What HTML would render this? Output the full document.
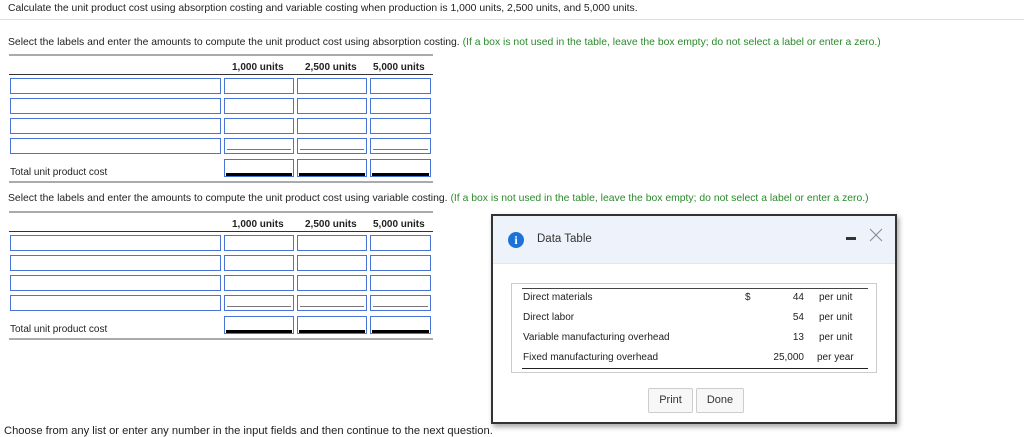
<!DOCTYPE html>
<html><head><style>
body{margin:0;width:1024px;height:437px;background:#fff;font-family:"Liberation Sans",Arial,sans-serif;font-size:10px;color:#222;position:relative;overflow:hidden}
.a{position:absolute;white-space:nowrap}
.g{color:#2a8a2a}
.b{position:absolute;border:1px solid #4a74d8;box-sizing:border-box;background:#fff}
.hl{position:absolute;height:2px;background:#aaa}
.hd{position:absolute;height:1px;background:#333}
.u{position:absolute;height:1px;background:#777}
.uu{position:absolute;height:3px;background:#000}
.d{font-size:10px}
</style></head><body>
<div class="a" style="left:8px;top:3px;font-size:10.4px">Calculate the unit product cost using absorption costing and variable costing when production is 1,000 units, 2,500 units, and 5,000 units.</div>
<div style="position:absolute;left:0;top:19px;width:1024px;height:1px;background:#ddd"></div>
<div class="a" style="left:8px;top:37px;font-size:10.4px">Select the labels and enter the amounts to compute the unit product cost using absorption costing. <span class="g">(If a box is not used in the table, leave the box empty; do not select a label or enter a zero.)</span></div>
<div class="a" style="left:8px;top:193px;font-size:10.4px">Select the labels and enter the amounts to compute the unit product cost using variable costing. <span class="g">(If a box is not used in the table, leave the box empty; do not select a label or enter a zero.)</span></div>
<div class="a" style="left:4px;top:425px;font-size:11.2px">Choose from any list or enter any number in the input fields and then continue to the next question.</div>

<div id="t1"></div>
<script>
function tbl(o){
 let h='';
 h+=`<div class="hl" style="left:9px;top:${o+54}px;width:424px"></div>`;
 h+=`<div class="a" style="left:232px;top:${o+62}px;font-weight:bold;font-size:10px">1,000 units</div>`;
 h+=`<div class="a" style="left:305px;top:${o+62}px;font-weight:bold;font-size:10px">2,500 units</div>`;
 h+=`<div class="a" style="left:373px;top:${o+62}px;font-weight:bold;font-size:10px">5,000 units</div>`;
 h+=`<div class="hd" style="left:9px;top:${o+74}px;width:424px"></div>`;
 const ys=[78,98,118,138];
 ys.forEach((y,i)=>{
  h+=`<div class="b" style="left:10px;top:${o+y}px;width:211px;height:16px"></div>`;
  [[224,70],[297,70],[370,61]].forEach(([x,w])=>{
   h+=`<div class="b" style="left:${x}px;top:${o+y}px;width:${w}px;height:16px"></div>`;
   if(i==3)h+=`<div class="u" style="left:${x+3}px;top:${o+y+11}px;width:${w-6}px"></div>`;
  });
 });
 [[224,70],[297,70],[370,61]].forEach(([x,w])=>{
  h+=`<div class="b" style="left:${x}px;top:${o+159}px;width:${w}px;height:18px"></div>`;
  h+=`<div class="uu" style="left:${x+2}px;top:${o+173}px;width:${w-4}px"></div>`;
 });
 h+=`<div class="a" style="left:10px;top:${o+167}px;font-size:10px">Total unit product cost</div>`;
 h+=`<div class="hl" style="left:9px;top:${o+181}px;width:424px"></div>`;
 return h;
}
document.getElementById('t1').outerHTML=tbl(0)+tbl(157);
</script>

<div style="position:absolute;left:491px;top:214px;width:406px;height:210px;border:2px solid #333;box-sizing:border-box;background:#fff;box-shadow:2px 3px 5px rgba(0,0,0,.35)">
 <div style="position:absolute;left:0;top:0;right:0;height:47px;background:#eef3fb;border-bottom:1px solid #dde8f5"></div>
 <div style="position:absolute;left:15px;top:16px;width:16px;height:16px;border-radius:50%;background:#1a73d9;color:#fff;font-weight:bold;font-size:12px;text-align:center;line-height:16px;font-family:'Liberation Serif',serif">i</div>
 <div class="a" style="left:44px;top:17px;font-size:11.5px;color:#333">Data Table</div>
 <div style="position:absolute;left:353px;top:21px;width:10px;height:3px;background:#333"></div>
 <svg style="position:absolute;left:376px;top:12px" width="14" height="14"><path d="M1 1L13 13M13 1L1 13" stroke="#888" stroke-width="1"/></svg>
 <div style="position:absolute;left:18px;top:67px;width:366px;height:90px;border:1px solid #ccc;box-sizing:border-box"></div>
 <div style="position:absolute;left:29px;top:72px;width:346px;height:1px;background:#444"></div>
 <div style="position:absolute;left:29px;top:152px;width:346px;height:1px;background:#222"></div>
 <div class="a d" style="left:30px;top:76px">Direct materials</div>
 <div class="a d" style="left:30px;top:96px">Direct labor</div>
 <div class="a d" style="left:30px;top:116px">Variable manufacturing overhead</div>
 <div class="a d" style="left:30px;top:136px">Fixed manufacturing overhead</div>
 <div class="a d" style="left:252px;top:76px">$</div>
 <div class="a d" style="right:91px;top:76px">44</div>
 <div class="a d" style="right:91px;top:96px">54</div>
 <div class="a d" style="right:91px;top:116px">13</div>
 <div class="a d" style="right:91px;top:136px">25,000</div>
 <div class="a d" style="left:326px;top:76px">per unit</div>
 <div class="a d" style="left:326px;top:96px">per unit</div>
 <div class="a d" style="left:326px;top:116px">per unit</div>
 <div class="a d" style="left:324px;top:136px">per year</div>
 <div style="position:absolute;left:155px;top:172px;width:43px;height:23px;border:1px solid #ccc;border-radius:2px;background:#f7f7f7;text-align:center;line-height:23px;font-size:11px;color:#333">Print</div>
 <div style="position:absolute;left:203px;top:172px;width:46px;height:23px;border:1px solid #ccc;border-radius:2px;background:#f7f7f7;text-align:center;line-height:23px;font-size:11px;color:#333">Done</div>
</div>
</body></html>
